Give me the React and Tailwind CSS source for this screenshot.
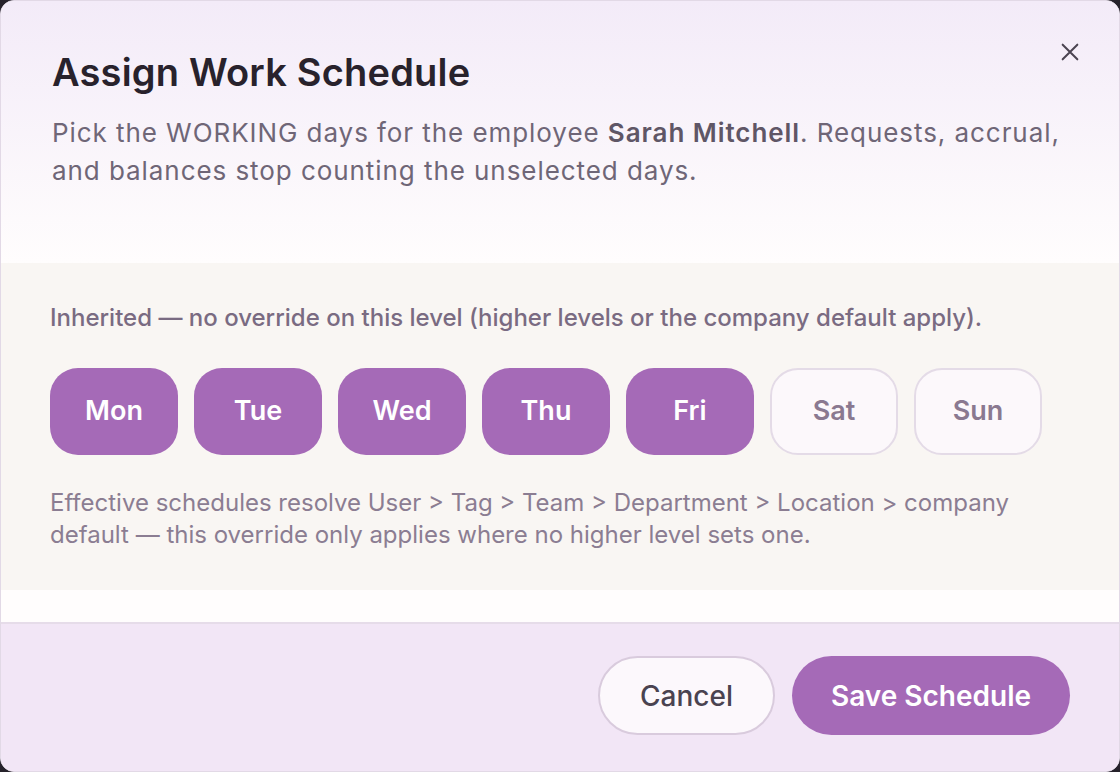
import React, { useState } from "react";

const DAYS = ["Mon", "Tue", "Wed", "Thu", "Fri", "Sat", "Sun"];

export default function App() {
  const [selected, setSelected] = useState(["Mon", "Tue", "Wed", "Thu", "Fri"]);
  const toggle = (d) =>
    setSelected((s) => (s.includes(d) ? s.filter((x) => x !== d) : [...s, d]));

  return (
    <div
      className="w-[1120px] h-[772px] bg-[#26222b] overflow-hidden [font-optical-sizing:none]"
      style={{ fontFamily: "Inter, 'Noto Sans', sans-serif" }}
    >
      <div className="w-full h-full rounded-[14px] border border-[#e2d9e6] bg-white overflow-hidden flex flex-col">
        {/* Header */}
        <div className="relative h-[262px] shrink-0 bg-gradient-to-b from-[#f3ebf8] to-[#fffdfd] px-[51px] pt-[49px]">
          <h1 className="text-[38px] leading-[44px] font-semibold text-[#28222c] tracking-[0.005em]">
            Assign Work Schedule
          </h1>
          <p className="mt-[20px] text-[26px] leading-[38px] text-[#6f6677] tracking-[0.036em]">
            Pick the WORKING days for the employee{" "}
            <span className="font-semibold text-[#5f5666]">Sarah Mitchell</span>. Requests, accrual,
            and balances stop counting the unselected days.
          </p>
          <button className="absolute right-[36px] top-[38px] w-[26px] h-[26px] flex items-center justify-center text-[#4b4451]">
            <svg width="22" height="22" viewBox="0 0 24 24" fill="none" stroke="currentColor" strokeWidth="2.2" strokeLinecap="round">
              <path d="M4 4L20 20M20 4L4 20" />
            </svg>
          </button>
        </div>

        {/* Body */}
        <div className="h-[327px] shrink-0 bg-[#f9f6f3] px-[49px] pt-[40px]">
          <p className="text-[24px] leading-[30px] font-medium text-[#7a6b82]">
            Inherited — no override on this level (higher levels or the company default apply).
          </p>
          <div className="mt-[35px] flex gap-[16px]">
            {DAYS.map((d) => {
              const on = selected.includes(d);
              return (
                <button
                  key={d}
                  onClick={() => toggle(d)}
                  className={
                    on
                      ? "w-[128px] h-[87px] rounded-[28px] bg-[#a56ab7] text-white text-[27px] font-semibold"
                      : "w-[128px] h-[87px] rounded-[28px] bg-[#fcf8fb] border-2 border-[#e4dbe7] text-[#8a7990] text-[27px] font-semibold"
                  }
                >
                  {d}
                </button>
              );
            })}
          </div>
          <p className="mt-[32px] text-[24px] leading-[32px] text-[#8b7d92]">
            Effective schedules resolve User &gt; Tag &gt; Team &gt; Department &gt; Location &gt; company
            default — this override only applies where no higher level sets one.
          </p>
        </div>

        <div className="h-[34px] shrink-0 bg-[#fffdfd] border-b-2 border-[#e6dce9]" />

        {/* Footer */}
        <div className="flex-1 bg-[#f2e6f6] flex items-start justify-end gap-[17px] pr-[49px] pt-[32px]">
          <button className="w-[177px] h-[79px] rounded-full border-2 border-[#d9cbdd] bg-[#fcf8fc] text-[28px] text-[#4a4350] font-medium">
            Cancel
          </button>
          <button className="w-[278px] h-[79px] rounded-full bg-[#a56ab7] text-[28px] text-white font-semibold">
            Save Schedule
          </button>
        </div>
      </div>
    </div>
  );
}
